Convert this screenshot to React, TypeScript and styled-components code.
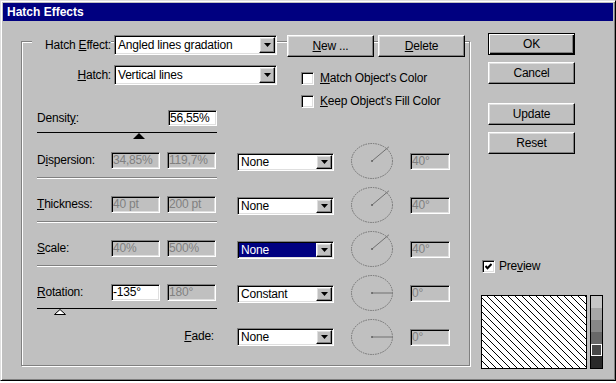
import React from 'react';
import styled, { createGlobalStyle, css } from 'styled-components';

const GlobalStyle = createGlobalStyle`
  * { box-sizing: border-box; }
  body {
    margin: 0;
    background: #fff;
    font-family: "Liberation Sans", Arial, sans-serif;
    font-size: 12px;
    letter-spacing: -0.2px;
    color: #000;
  }
`;

const sunken = css`
  border: 1px solid;
  border-color: #808080 #fff #fff #808080;
  box-shadow: inset 1px 1px #000, inset -1px -1px #dfdfdf;
`;

const raised = css`
  background: #c0c0c0;
  border: 1px solid;
  border-color: #fff #000 #000 #fff;
  box-shadow: inset -1px -1px #808080, inset 1px 1px #dfdfdf;
`;

const Window = styled.div`
  width: 616px;
  height: 381px;
  display: flex;
  flex-direction: column;
  padding: 2px;
  background: #c0c0c0;
  border: 1px solid;
  border-color: #dfdfdf #000 #000 #dfdfdf;
  box-shadow: inset 1px 1px #fff, inset -1px -1px #808080;
`;

const TitleBar = styled.div`
  height: 18px;
  padding-left: 4px;
  background: #000080;
  color: #fff;
  font-weight: bold;
  line-height: 18px;
  letter-spacing: 0;
`;

const Body = styled.div`
  display: flex;
  padding: 12px 0 0 18px;
`;

const GroupBox = styled.div`
  width: 449px;
  height: 325px;
  margin-top: 8px;
  padding-left: 10px;
  display: flex;
  flex-direction: column;
  border: 1px solid #808080;
  box-shadow: inset 1px 1px #fff, 1px 1px #fff;
`;

const Header = styled.div`
  display: flex;
  align-items: flex-start;
  height: 22px;
  margin-top: -7px;
`;

const Label = styled.div<{ $w: number; $right?: boolean; $h?: number }>`
  width: ${(p) => p.$w}px;
  height: ${(p) => p.$h ?? 20}px;
  line-height: ${(p) => p.$h ?? 20}px;
  text-align: ${(p) => (p.$right ? 'right' : 'left')};
  white-space: nowrap;
  flex-shrink: 0;
`;

const HeaderLabel = styled(Label)`
  background: #c0c0c0;
`;

const Key = styled.span`
  text-decoration: underline;
  text-underline-offset: 1px;
`;

const Select = styled.div<{ $w: number; $h: number; $ml?: number; $mt?: number }>`
  ${sunken};
  display: flex;
  flex-shrink: 0;
  width: ${(p) => p.$w}px;
  height: ${(p) => p.$h}px;
  margin-left: ${(p) => p.$ml ?? 0}px;
  margin-top: ${(p) => p.$mt ?? 0}px;
  padding: 1px;
  background: #fff;
`;

const SelectValue = styled.div<{ $selected?: boolean }>`
  flex: 1;
  display: flex;
  align-items: center;
  padding-left: 2px;
  white-space: nowrap;
  overflow: hidden;
  background: ${(p) => (p.$selected ? '#000080' : 'transparent')};
  color: ${(p) => (p.$selected ? '#fff' : '#000')};
`;

const SelectArrow = styled.div`
  ${raised};
  width: 16px;
  display: flex;
  align-items: center;
  justify-content: center;
`;

const Button = styled.button<{ $default?: boolean; $ml?: number; $mt?: number }>`
  ${raised};
  width: 87px;
  height: 22px;
  flex-shrink: 0;
  margin-left: ${(p) => p.$ml ?? 0}px;
  margin-top: ${(p) => p.$mt ?? 0}px;
  padding: 0;
  font: inherit;
  letter-spacing: inherit;
  color: #000;
  ${(p) =>
    p.$default &&
    css`
      border-color: #000;
      box-shadow: inset 1px 1px #fff, inset -1px -1px #000, inset -2px -2px #808080;
    `}
`;

const TopSection = styled.div`
  display: flex;
  margin-top: 8px;
`;

const TopLeft = styled.div`
  width: 245px;
  display: flex;
  flex-direction: column;
`;

const Row = styled.div`
  display: flex;
  align-items: center;
`;

const DensityRow = styled.div`
  width: 180px;
  margin: 25px 0 0 5px;
  display: flex;
  align-items: center;
  justify-content: space-between;
`;

const CheckColumn = styled.div`
  margin: 7px 0 0 24px;
  display: flex;
  flex-direction: column;
  gap: 10px;
`;

const CheckRow = styled.div`
  display: flex;
  align-items: center;
  gap: 6px;
  height: 13px;
  line-height: 13px;
  white-space: nowrap;
`;

const CheckBox = styled.div`
  ${sunken};
  width: 13px;
  height: 13px;
  background: #fff;
  display: flex;
  align-items: center;
  justify-content: center;
`;

const Field = styled.div<{ $w: number; $disabled?: boolean; $ml?: number; $mt?: number; $h?: number }>`
  ${sunken};
  flex-shrink: 0;
  width: ${(p) => p.$w}px;
  height: ${(p) => p.$h ?? 17}px;
  margin-left: ${(p) => p.$ml ?? 0}px;
  margin-top: ${(p) => p.$mt ?? 0}px;
  padding: 0 1px;
  line-height: ${(p) => (p.$h ?? 17) - 2}px;
  white-space: nowrap;
  overflow: hidden;
  background: ${(p) => (p.$disabled ? '#c0c0c0' : '#fff')};
  color: ${(p) => (p.$disabled ? '#808080' : '#000')};
`;

const SliderTrack = styled.div<{ $ml?: number; $mt?: number }>`
  position: relative;
  width: 180px;
  height: 7px;
  margin-left: ${(p) => p.$ml ?? 0}px;
  margin-top: ${(p) => p.$mt ?? 0}px;
  border-top: 1px solid #000;
`;

const Thumb = styled.svg`
  position: absolute;
  top: 0;
  margin-left: -6px;
`;

const PropRow = styled.div<{ $mt: number }>`
  display: flex;
  align-items: flex-start;
  height: 36px;
  margin: ${(p) => p.$mt}px 0 0 5px;
`;

const FieldBlock = styled.div`
  width: 180px;
  padding-top: 9px;
  display: flex;
  flex-direction: column;
`;

const Fields = styled.div`
  display: flex;
  align-items: center;
  height: 17px;
`;

const Separator = styled.div`
  width: 180px;
  margin-top: 8px;
  border-top: 1px solid #808080;
  border-bottom: 1px solid #fff;
`;

const DialSvg = styled.svg`
  flex-shrink: 0;
  margin-left: 17px;
`;

const RightColumn = styled.div`
  width: 122px;
  margin-left: 11px;
  display: flex;
  flex-direction: column;
`;

const PreviewCheck = styled(CheckRow)`
  margin: 106px 0 0 1px;
  gap: 4px;
`;

const PreviewArea = styled.div`
  display: flex;
  gap: 3px;
  margin-top: 22px;
`;

const PreviewBox = styled.svg`
  display: block;
  border: 1px solid #000;
  background: #fff;
`;

const ShadeBar = styled.div`
  width: 13px;
  height: 74px;
  border: 1px solid #000;
  display: flex;
  flex-direction: column;
`;

const Shade = styled.div<{ $c: string; $active?: boolean }>`
  flex: 1;
  background: ${(p) => p.$c};
  box-shadow: ${(p) => (p.$active ? 'inset 0 0 0 1px #fff' : 'none')};
`;

const Mn = ({ text, at }: { text: string; at: number }) => (
  <>
    {text.slice(0, at)}
    <Key>{text[at]}</Key>
    {text.slice(at + 1)}
  </>
);

const Arrow = () => (
  <svg width="7" height="4" viewBox="0 0 7 4">
    <polygon points="0,0 7,0 3.5,4" fill="#000" />
  </svg>
);

const Dropdown = ({
  value,
  w,
  h,
  ml,
  mt,
  selected,
}: {
  value: string;
  w: number;
  h: number;
  ml?: number;
  mt?: number;
  selected?: boolean;
}) => (
  <Select $w={w} $h={h} $ml={ml} $mt={mt}>
    <SelectValue $selected={selected}>{value}</SelectValue>
    <SelectArrow>
      <Arrow />
    </SelectArrow>
  </Select>
);

const Dial = ({ deg }: { deg: number }) => {
  const r = (deg * Math.PI) / 180;
  const x = 21 + 22 * Math.cos(r);
  const y = 18 - 22 * Math.sin(r);
  return (
    <DialSvg width="42" height="36" viewBox="0 0 42 36">
      <ellipse cx="21" cy="18" rx="20.5" ry="17.5" fill="none" stroke="#707070" strokeDasharray="1.5 1" />
      <line x1="21" y1="18" x2={Math.min(x, 41)} y2={y} stroke="#707070" />
      <circle cx="21" cy="18" r="1" fill="#606060" />
    </DialSvg>
  );
};

const Slider = ({ pos, hollow, ml, mt }: { pos: number; hollow?: boolean; ml?: number; mt?: number }) => (
  <SliderTrack $ml={ml} $mt={mt}>
    <Thumb width="12" height="6" viewBox="0 0 12 6" style={{ left: `${pos * 100}%` }}>
      {hollow ? (
        <polygon points="6,0.5 11.5,5.5 0.5,5.5" fill="#fff" stroke="#000" />
      ) : (
        <polygon points="6,0 12,6 0,6" fill="#000" />
      )}
    </Thumb>
  </SliderTrack>
);

const HatchPreview = () => {
  const lines = [];
  for (let k = -72; k < 104; k += 7) {
    lines.push(<line key={k} x1={k} y1={0} x2={k + 72} y2={72} />);
  }
  return (
    <PreviewBox width="106" height="74" viewBox="0 0 104 72">
      <g stroke="#000" strokeWidth="1" shapeRendering="crispEdges">
        {lines}
      </g>
    </PreviewBox>
  );
};

const properties = [
  { label: 'Dispersion:', at: 1, from: '34,85%', to: '119,7%', mode: 'None', angle: '40°', deg: 40 },
  { label: 'Thickness:', at: 0, from: '40 pt', to: '200 pt', mode: 'None', angle: '40°', deg: 40 },
  { label: 'Scale:', at: 0, from: '40%', to: '500%', mode: 'None', angle: '40°', deg: 40, selected: true },
  { label: 'Rotation:', at: 0, from: '-135°', to: '180°', mode: 'Constant', angle: '0°', deg: 0, active: true },
];

const shades = ['#c6c6c6', '#a6a6a6', '#878787', '#686868', '#484848', '#292929'];

export default function App() {
  return (
    <>
      <GlobalStyle />
      <Window>
        <TitleBar>Hatch Effects</TitleBar>
        <Body>
          <GroupBox>
            <Header>
              <HeaderLabel $w={79} $right>
                Hatch <Mn text="Effect:" at={0} />
              </HeaderLabel>
              <Dropdown value="Angled lines gradation" w={163} h={20} ml={3} />
              <Button $ml={10}>
                <Mn text="New ..." at={0} />
              </Button>
              <Button $ml={4}>
                <Mn text="Delete" at={0} />
              </Button>
            </Header>

            <TopSection>
              <TopLeft>
                <Row>
                  <Label $w={79} $right>
                    <Mn text="Hatch:" at={0} />
                  </Label>
                  <Dropdown value="Vertical lines" w={163} h={20} ml={3} />
                </Row>
                <DensityRow>
                  <Label $w={80} $h={16}>
                    <Mn text="Density:" at={6} />
                  </Label>
                  <Field $w={49} $h={16}>56,55%</Field>
                </DensityRow>
                <Slider pos={0.5655} ml={5} mt={6} />
              </TopLeft>
              <CheckColumn>
                <CheckRow>
                  <CheckBox />
                  <span>
                    <Mn text="Match Object's Color" at={0} />
                  </span>
                </CheckRow>
                <CheckRow>
                  <CheckBox />
                  <span>
                    <Mn text="Keep Object's Fill Color" at={0} />
                  </span>
                </CheckRow>
              </CheckColumn>
            </TopSection>

            {properties.map((p, i) => (
              <PropRow key={p.label} $mt={i === 0 ? 4 : 8}>
                <FieldBlock>
                  <Fields>
                    <Label $w={74} $h={17}>
                      <Mn text={p.label} at={p.at} />
                    </Label>
                    <Field $w={49} $disabled={!p.active}>
                      {p.from}
                    </Field>
                    <Field $w={49} $ml={7} $disabled>
                      {p.to}
                    </Field>
                  </Fields>
                  {p.active ? <Slider pos={0.125} hollow mt={7} /> : <Separator />}
                </FieldBlock>
                <Dropdown value={p.mode} w={97} h={18} ml={20} mt={10} selected={p.selected} />
                <Dial deg={p.deg} />
                <Field $w={40} $ml={17} $mt={10} $disabled>
                  {p.angle}
                </Field>
              </PropRow>
            ))}

            <PropRow $mt={8}>
              <FieldBlock>
                <Label $w={177} $h={17} $right>
                  <Mn text="Fade:" at={0} />
                </Label>
              </FieldBlock>
              <Dropdown value="None" w={97} h={18} ml={20} mt={9} />
              <Dial deg={0} />
              <Field $w={40} $ml={17} $mt={10} $disabled>
                0°
              </Field>
            </PropRow>
          </GroupBox>

          <RightColumn>
            <Button $default $ml={7}>
              OK
            </Button>
            <Button $ml={7} $mt={7}>
              Cancel
            </Button>
            <Button $ml={7} $mt={19}>
              Update
            </Button>
            <Button $ml={7} $mt={7}>
              Reset
            </Button>
            <PreviewCheck>
              <CheckBox>
                <svg width="7" height="7" viewBox="0 0 7 7">
                  <polyline points="0.5,3 2.5,5.2 6.5,1" fill="none" stroke="#000" strokeWidth="2" />
                </svg>
              </CheckBox>
              <span>
                <Mn text="Preview" at={3} />
              </span>
            </PreviewCheck>
            <PreviewArea>
              <HatchPreview />
              <ShadeBar>
                {shades.map((c, i) => (
                  <Shade key={c} $c={c} $active={i === 4} />
                ))}
              </ShadeBar>
            </PreviewArea>
          </RightColumn>
        </Body>
      </Window>
    </>
  );
}
